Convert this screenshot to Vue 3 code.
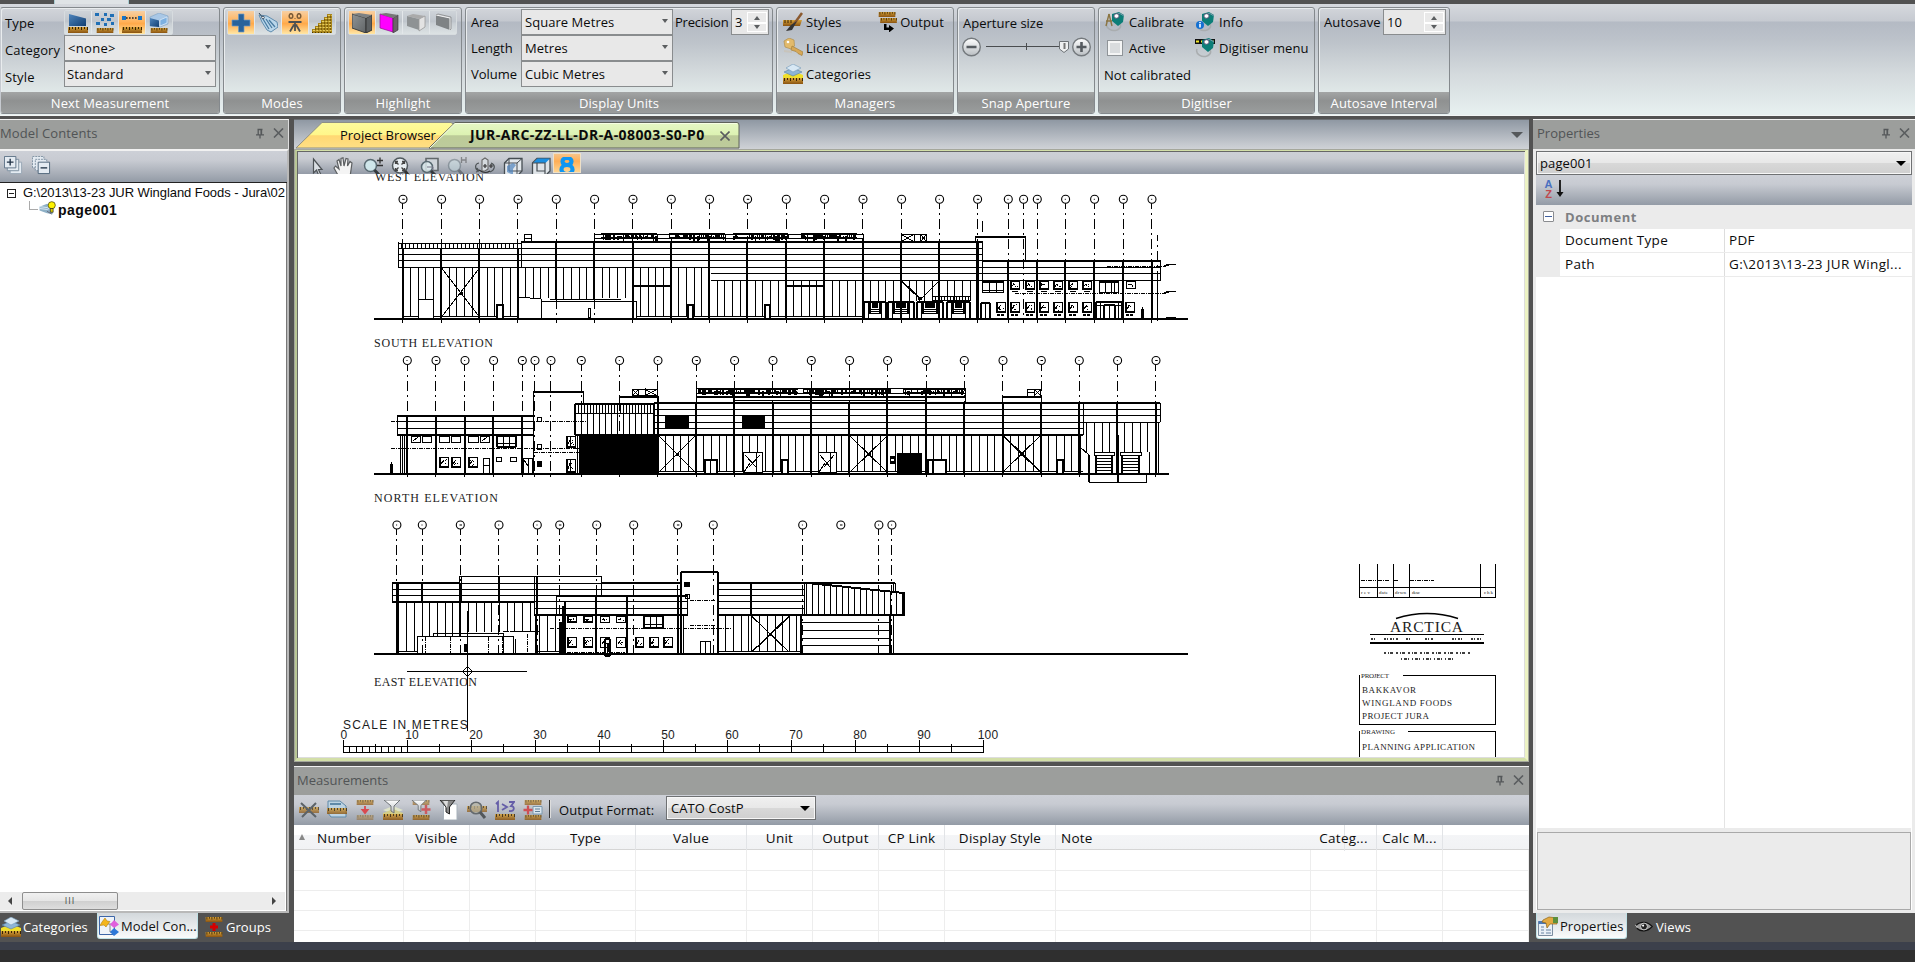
<script setup>
const columns = [
  { name: 'Number', w: 110, align: 'center', sorted: true },
  { name: 'Visible', w: 66, align: 'center' },
  { name: 'Add', w: 66, align: 'center' },
  { name: 'Type', w: 100, align: 'center' },
  { name: 'Value', w: 111, align: 'center' },
  { name: 'Unit', w: 66, align: 'center' },
  { name: 'Output', w: 66, align: 'center' },
  { name: 'CP Link', w: 66, align: 'center' },
  { name: 'Display Style', w: 111, align: 'center' },
  { name: 'Note', w: 255, align: 'left' },
  { name: 'Categ...', w: 66, align: 'center' },
  { name: 'Calc M...', w: 66, align: 'center' },
  { name: '', w: 86, align: 'left' },
]
const gridCols = columns.map(c => c.w + 'px').join(' ')
const viewTools = ['cursor', 'hand', 'zoompm', 'zoomfit', 'zoomwin', 'zoomprev', 'orbit', 'cube1', 'cube2', 'eight']
const measureTools = ['m-del', 'm-copy', 'm-down', 'm-filt', 'm-filtadd', 'm-funnel', 'm-find', 'm-123', 'm-add']

/* ---------- elevation drawing ---------- */
const ink = { base: '', detail: '' }
let layer = 'base'
let thick = ''
let solid = ''
let chain = ''
let stems = ''
let white = ''
const circles = []
let seed = 7
const rnd = () => (seed = (seed * 16807) % 2147483647) / 2147483647
const R = v => Math.round(v)
const onTop = draw => { layer = 'detail'; draw(); layer = 'base' }
const h = (x1, x2, y) => { ink[layer] += `M${x1} ${R(y - 0.5) + 0.5}H${x2}` }
const v = (x, y1, y2) => { ink[layer] += `M${R(x - 0.5) + 0.5} ${y1}V${y2}` }
const H = (x1, x2, y) => { thick += `M${x1} ${R(y)}H${x2}` }
const V = (x, y1, y2) => { thick += `M${R(x)} ${y1}V${y2}` }
const box = (x1, y1, x2, y2) => { h(x1, x2 + 1, y1); h(x1, x2 + 1, y2); v(x1, y1, y2); v(x2, y1, y2) }
const Box = (x1, y1, x2, y2) => { H(x1, x2, y1); H(x1, x2, y2); V(x1, y1, y2); V(x2, y1, y2) }
const fill = (x1, y1, x2, y2) => { solid += `M${x1} ${y1}H${x2}V${y2}H${x1}Z` }
const clear = (x1, y1, x2, y2) => { white += `M${x1} ${y1}H${x2}V${y2}H${x1}Z` }
const line = (x1, y1, x2, y2) => { ink[layer] += `M${x1} ${y1}L${x2} ${y2}` }
const cross = (x1, y1, x2, y2) => { line(x1, y1, x2, y2); line(x1, y2, x2, y1); fill(R((x1 + x2) / 2) - 1, R((y1 + y2) / 2) - 1, R((x1 + x2) / 2) + 2, R((y1 + y2) / 2) + 2) }
const panels = (x1, x2, y1, y2, step) => { for (let x = x1 + step; x < x2 - 2; x += step) v(x, y1, y2) }
const hs = (x1, x2, ys) => ys.forEach(y => h(x1, x2, y))
const grid = (xs, cy, end) => xs.forEach(x => {
  circles.push([x + 0.3, cy])
  if (end) stems += `M${R(x - 0.5) + 0.5} ${cy + 4}V${end}`
})
const noise = (x1, x2, y1, y2) => {
  fill(x1, y1, x2, y1 + 2)
  for (let x = x1; x < x2; x += 2) {
    if (rnd() > 0.15) fill(x, y1 + 1 + R(rnd() * 2), x + 1 + R(rnd()), y1 + 4 + R(rnd() * (y2 - y1 - 4)))
  }
  h(x1, x2, y1 + 4)
}
const win = (x1, y1, x2, y2, heavy) => {
  box(x1, y1, x2, y2)
  for (let i = 0; i < 4; i++) {
    const x = x1 + 2 + R(rnd() * (x2 - x1 - 4)); const y = y1 + 2 + R(rnd() * (y2 - y1 - 4))
    fill(x, y, x + 1, y + 1)
  }
  line(x1 + 2, y2 - 3, (x1 + x2) / 2, y1 + 3)
  if (heavy) { fill(x1, y2 - 1, x2 + 1, y2 + 1); v(x1 + 1, y1, y2) }
}
const door = (x1, y1, x2, y2) => onTop(() => { clear(x1, y1, x2, y2); H(x1, x2 + 1, y1 + 1); v(x1, y1, y2); v(x1 + 1, y1, y2); v(x2, y1, y2); v(x2 - 1, y1, y2) })

/* first elevation */
const g1 = [402.7, 441.3, 479.3, 517.7, 556, 594.3, 632.7, 671, 709.3, 747.3, 786, 824.3, 862.7, 901.3, 939.3, 977.3]
const g1b = [1008, 1023.3, 1037, 1065.3, 1094.3, 1123, 1151.7]
grid(g1.concat(g1b), 199.3, 323)
H(374, 1188, 319)
hs(398, 522, [243, 248, 254, 260, 267]); v(398, 242, 267); v(521, 241, 267)
for (let x = 401; x < 520; x += 4) v(x, 243, 248)
H(521, 983, 242)
hs(522, 982, [248, 254, 260, 267]); v(982, 241, 281)
hs(711, 982, [273, 280])
g1.forEach(x => V(x, x < 520 ? 248 : 241, (x > 540 && x < 600) ? 300 : 319))
for (let i = 0; i < 8; i++) {
  if (i === 4) panels(g1[i], g1[i + 1], 267, 299, 7.7)
  else if (i === 3 || i === 5) panels(g1[i], g1[i + 1], 267, 298, 7.7)
  else panels(g1[i], g1[i + 1], 267, 316, 7.7)
}
for (let i = 8; i < 12; i++) panels(g1[i], g1[i + 1], 280, 316, 7.7)
for (let i = 12; i < 15; i++) panels(g1[i], g1[i + 1], 280, 301, 7.7)
h(403, 518, 316); h(636, 863, 316)
cross(441.5, 268, 479.5, 317)
clear(419, 299, 433, 318)
onTop(() => box(418, 299, 433, 318))
H(633, 671, 286); H(786, 824, 286)
line(518, 297, 541, 299); v(541, 299, 319); h(541, 636, 301); h(550, 621, 299); v(636, 301, 319)
box(588, 308, 590, 317)
;[[496, 503], [687, 693], [764, 770]].forEach(([a, b]) => door(a, 304, b, 318))
box(524, 234, 531, 241); h(524, 531, 238)
h(594, 863, 234); v(594, 234, 241); v(863, 234, 241); v(657, 234, 241); v(725, 234, 241); h(594, 863, 238)
;[[601, 657], [669, 725], [733, 788], [801, 857]].forEach(([a, b]) => noise(a, b, 233, 241))
box(901, 234, 926, 241); line(902, 235, 913, 241); line(902, 241, 913, 235); v(914, 234, 243); v(920, 234, 243); line(921, 235, 926, 241); line(921, 241, 926, 235)
line(901, 281, 920, 299); line(902, 281, 921, 299); line(939, 281, 917, 303); fill(918, 297, 922, 300)
;[[864, 886], [888, 914], [917, 943], [947, 970]].forEach(([a, b]) => {
  Box(a, 302, b, 319); v(a + 4, 302, 319); v(b - 5, 302, 319)
  fill(a + 8, 303, b - 8, 308); h(a + 5, b - 5, 309); h(a + 5, b - 5, 313); h(a + 5, b - 5, 311); fill(a + 5, 303, a + 7, 313); fill(b - 7, 303, b - 5, 313)
})
h(932, 970, 296); h(932, 970, 300); for (let x = 932; x < 971; x += 3) v(x, 296, 300)
v(982, 221, 232)
H(975, 1026, 237); v(975, 236, 241); v(1025, 236, 260)
H(982, 1161, 261); hs(982, 1161, [267, 273, 280]); v(1160, 260, 280)
;[1008, 1037, 1065.3, 1094.3, 1123].forEach(x => V(x, 260, 319)); V(1152, 260, 319); V(978, 241, 319); v(1157, 280, 319)
stems += 'M1157.5 235V323'
box(982, 281, 1003, 292); v(989, 281, 292); v(996, 281, 292); h(983, 1003, 282); h(982, 1003, 290)
;[1015, 1030, 1044, 1058, 1073, 1087].forEach(c => { win(c - 5, 281, c + 4, 289, true); h(c - 3, c + 3, 291) })
box(1099, 281, 1118, 292); v(1105, 281, 292); v(1111, 281, 292); h(1099, 1118, 282); v(1114, 281, 292)
win(1126, 281, 1135, 288)
;[1001, 1015, 1030, 1044, 1058, 1073, 1087, 1130].forEach(c => { win(c - 5, 302, c + 4, 312, true); fill(c - 4, 314, c - 1, 316); fill(c, 314, c + 3, 316) })
Box(981, 303, 990, 319); v(985, 303, 319)
Box(1096, 302, 1122, 319); Box(1104, 305, 1115, 319); v(1109, 305, 319); v(1100, 302, 319); v(1118, 302, 319); h(1096, 1122, 305)
chain += 'M1015 293.5H1166M1107 266.5H1166'
;[264, 291, 317].forEach(y => { line(1164, y + 2, 1169, y); h(1168, 1176, y); fill(1166, y, 1169, y + 2) })
box(1141, 309, 1143, 318); v(1142, 307, 318)

/* second elevation */
const g2 = [407, 435.7, 464.7, 493.3, 522, 534.7, 550.7, 581, 619.3, 657.7, 696, 734.3, 772.7, 811, 849.3, 887.3, 926, 964, 1002.7, 1041, 1079, 1117.3, 1155.7]
grid(g2, 360.5, 478)
H(374, 1169, 474)
H(397, 534, 416); hs(397, 534, [421, 428]); H(397, 534, 435); v(397, 416, 435)
;[407, 435.7, 464.7, 493.3, 522].forEach(x => V(x, 416, 474))
v(400, 435, 474); v(402, 435, 474); v(404, 435, 474)
H(533, 584, 392); v(533, 391, 474); v(583, 391, 404)
Box(575, 404, 654, 435); h(575, 654, 413)
for (let x = 578; x < 653; x += 3) v(x, 404, 413)
panels(575, 654, 413, 435, 6)
fill(580, 434, 658, 474); v(577, 435, 474); v(579, 435, 474)
H(619, 659, 397); v(619, 396, 404); V(658, 396, 474)
box(632, 389, 657, 395); v(638, 389, 395); v(645, 388, 395); line(633, 390, 638, 395); line(633, 395, 638, 390); line(646, 390, 656, 395); line(646, 395, 656, 390)
H(654, 1160, 403); hs(654, 1083, [409, 415, 422, 428]); H(654, 1083, 435)
hs(1083, 1160, [409, 415, 422]); v(1083, 403, 435); v(1160, 403, 422)
h(696, 965, 388); H(696, 965, 397); h(734, 926, 400); v(965, 388, 402); v(696, 388, 402); h(696, 965, 393)
noise(698, 798, 388, 396); noise(803, 890, 388, 396); noise(903, 964, 388, 396)
;[734.3, 811, 887.3, 926].forEach(x => V(x, 388, 402))
H(1003, 1042, 397); v(1002, 397, 402); v(1041, 397, 402); box(1027, 389, 1040, 396); v(1034, 389, 396); h(1027, 1034, 392); line(1035, 390, 1040, 395); line(1035, 395, 1040, 390)
g2.slice(10).forEach(x => V(x, 403, 474))
for (let i = 9; i < 20; i++) panels(g2[i], g2[i + 1], 435, 472, 7.7)
panels(1079, 1117, 422, 452, 7.7); panels(1117, 1156, 422, 452, 7.7)
v(1149, 452, 474)
h(659, 1083, 471)
cross(659, 436, 695, 472); cross(850, 436, 887, 472); cross(1003, 436, 1040, 472); line(1004, 436, 1041, 472)
fill(665, 415, 689, 429); fill(742, 415, 765, 429)
door(704, 459, 717, 473)
door(781, 459, 788, 473)
door(927, 459, 946, 473); V(933, 459, 474)
door(1056, 459, 1063, 473)
onTop(() => {
  v(710, 460, 474)
  ;[[743, 762], [818, 836]].forEach(([a, b]) => { clear(a, 453, b, 472); box(a, 452, b, 472); line(a + 2, 455, b - 6, 467); line(b - 2, 455, a + 6, 467); line(a + 1, 472, a + 7, 463); v(b - 6, 452, 472) })
  ;[[1094, 1114], [1120, 1141]].forEach(([a, b]) => {
    clear(a, 453, b, 473); box(a, 452, b, 455); V(a + 2, 455, 474); V(b - 2, 455, 474)
    for (let y = 458; y < 474; y += 3) h(a + 2, b - 2, y)
  })
})
fill(897, 453, 922, 474); box(890, 456, 894, 463); fill(891, 457, 894, 459); fill(891, 461, 894, 463)
V(1118, 435, 482); V(1089, 455, 482); h(1089, 1147, 482); v(1146, 474, 482); line(1080, 447, 1089, 455); V(1080, 435, 474); v(1158, 422, 474)
;[[411, 420], [422, 431], [439, 449], [451, 460], [468, 478], [480, 489]].forEach(([a, b], i) => { box(a, 436, b, 442); if (i % 5 === 0) line(a + 2, 441, b - 2, 437) })
Box(497, 436, 516, 447); v(503, 436, 447); v(509, 436, 447); h(497, 516, 443)
;[[439, 448], [451, 460], [468, 477]].forEach(([a, b]) => win(a, 457, b, 467, true))
box(483, 458, 489, 474); box(496, 457, 501, 461); box(510, 457, 516, 461); h(483, 489, 465)
box(523, 458, 532, 474); v(528, 458, 474); line(524, 460, 528, 466)
box(537, 417, 541, 421); box(537, 444, 541, 449); fill(537, 461, 542, 467)
win(566, 436, 575, 447, true); win(566, 459, 575, 472, true); v(570, 436, 447); v(570, 459, 472)
chain += 'M391 421.5H586M391 448.5H581M534 452.5H580'
box(390, 464, 392, 473); v(391, 462, 473)

/* third elevation */
const g3 = [396.6, 422, 460, 498.7, 537, 559.4, 596.4, 633.4, 677.4, 713, 802.4]
grid(g3, 525, 655); grid([840.5], 525, 0); grid([878.6, 891.6], 525, 655)
H(374, 1188, 654)
H(392, 460, 583); hs(392, 536, [589, 595]); H(392, 534, 602); v(392, 583, 602)
h(459, 602, 576); hs(459, 602, [583, 589]); v(459, 576, 602); v(461, 576, 602); v(601, 576, 595); v(534, 576, 615)
hs(536, 602, [595])
;[396.6, 398, 460].forEach(x => V(x, 583, x > 450 ? 636 : 654))
V(422, 583, 602); V(499, 576, 602); V(537, 576, 615)
H(602, 680, 583); hs(602, 680, [589])
hs(534, 556, [601, 608]); H(534, 688, 615)
H(556, 688, 596); hs(556, 688, [601, 608]); v(556, 596, 615); v(687, 596, 615)
;[596.4, 627, 678].forEach(x => V(x, 596, 654))
V(536, 615, 654); v(539, 615, 654); V(565, 601, 654); v(681, 615, 654); v(683, 615, 654)
panels(399, 459, 602, 636, 7.7); panels(461, 534, 602, 632, 7.7); panels(539, 560, 615, 651, 8)
v(406, 602, 652); v(414, 602, 652); h(398, 417, 651); h(537, 560, 651)
box(417, 636, 513, 654); h(433, 503, 633); v(433, 633, 636); v(503, 633, 654); v(515, 639, 654); h(512, 540, 631)
chain += 'M425.5 637V654M450.5 637V654M488.5 637V654M502.5 637V654M503 631.5H528M527.5 634V654M550 628.5H731M690 600.5H716M690 625.5H716M567 652.5H625'
fill(559, 622, 564, 654); fill(562, 606, 564, 630)
fill(464, 644, 467, 652)
Box(681, 572, 718, 654); fill(684, 582, 690, 587); box(685, 594, 689, 598)
;[[567, 576], [583, 592], [600, 609], [616, 625]].forEach(([a, b], i) => { win(a, 616, b, 622, i < 2); win(a, 637, b, 647, i < 2) })
;[[635, 643], [649, 658], [663, 672]].forEach(([a, b]) => win(a, 637, b, 647, true))
Box(644, 616, 663, 628); v(650, 616, 628); v(656, 616, 628); h(644, 663, 624)
Box(605, 639, 610, 656); fill(607, 643, 609, 652)
box(700, 641, 710, 653); v(705, 641, 653)
H(718, 895, 583); hs(718, 805, [589, 595, 601, 608]); H(718, 905, 615); V(751, 583, 615); v(804, 583, 615); v(806, 583, 615)
panels(718, 752, 615, 652, 7.7); panels(752, 789, 615, 652, 7.7); cross(751.5, 616, 789, 652); line(752, 652, 790, 616); v(751, 615, 652); v(789, 615, 652); panels(789, 800, 615, 652, 7); h(718, 800, 651)
for (let x = 812; x < 904; x += 6) v(x, 583 + (x - 808) * 0.1, 615)
thick += 'M808 583L904 593V615'; v(893, 583, 591); v(895, 583, 591)
V(801, 615, 654); hs(800, 889, [622, 630, 638, 645]); V(890, 615, 654); v(893, 615, 654)

/* scale bar */
h(343, 984, 746); h(343, 984, 752)
for (let i = 0; i <= 20; i++) v(343.5 + i * 32, i % 2 ? 744 : 740, 753)
for (let i = 1; i < 10; i++) v(343.5 + i * 6.4, 746, 753)
const scaleLabels = [0, 10, 20, 30, 40, 50, 60, 70, 80, 90, 100].map((n, i) => ({ n, x: i ? 348 + i * 64 : 344 }))

/* title block */
hs(1359, 1496, [587, 597])
;[1359, 1377, 1393, 1409, 1480, 1495].forEach(x => v(x, 564, 598))
chain += 'M1361 580.5H1376M1378 580.5H1390M1394 580.5H1399M1410 580.5H1434'
h(1370, 1484, 634); H(1370, 1484, 643)
h(1403, 1496, 675); v(1359, 675, 725); v(1495, 675, 725); h(1359, 1496, 724)
h(1408, 1496, 731); v(1359, 731, 757); v(1495, 731, 757)
</script>

<template>
  <div class="app">
    <svg class="defs" width="0" height="0">
      <defs>
        <linearGradient id="gBlue" x1="0" y1="0" x2="1" y2="1"><stop offset="0" stop-color="#4f86bd" /><stop offset="1" stop-color="#123f73" /></linearGradient>
        <linearGradient id="gGold" x1="0" y1="0" x2="0" y2="1"><stop offset="0" stop-color="#d6a23a" /><stop offset="1" stop-color="#8a5310" /></linearGradient>
        <linearGradient id="gGrey" x1="0" y1="0" x2="1" y2="1"><stop offset="0" stop-color="#909496" /><stop offset="1" stop-color="#606466" /></linearGradient>
        <linearGradient id="gLt" x1="0" y1="0" x2="0" y2="1"><stop offset="0" stop-color="#fff" /><stop offset="1" stop-color="#b9bec2" /></linearGradient>
      </defs>
      <symbol id="ruler" viewBox="0 0 20 6"><rect width="20" height="6" fill="url(#gGold)" /><path d="M1.500 0v3M4.500 0v2M7.500 0v3M10.500 0v2M13.500 0v3M16.500 0v2M19.500 0v3" stroke="#3a2404" /></symbol>
      <symbol id="t-area" viewBox="0 0 20 20"><path d="M1 1 18 5.500V13H1Z" fill="url(#gBlue)" /><use href="#ruler" y="14" width="20" height="6" /></symbol>
      <symbol id="t-count" viewBox="0 0 20 20"><path d="M0 0h4v3h-4zM9 0h3v3h-3zM15 1h4v3h-4zM6 5h3v3h-3zM12 5h4v3h-4zM1 9h4v3h-4zM9 10h3v3h-3zM16 9h3v3h-3z" fill="#1f6fb5" /><use href="#ruler" y="15" width="20" height="5" /></symbol>
      <symbol id="t-line" viewBox="0 0 20 20"><path d="M4 5H16" stroke="#222" stroke-width="1.600" stroke-dasharray="1.600 1.400" /><path d="M0 3h4v4h-4zM16 3h4v4h-4z" fill="#1873c4" /><use href="#ruler" y="14" width="20" height="6" /></symbol>
      <symbol id="t-vol" viewBox="0 0 20 20"><path d="M1 4 10 0 19 3V11L11 14 1 13Z" fill="#a9c8e6" stroke="#7fa3c4" stroke-width=".6" /><path d="M1 5 10 7.500V14L1 13Z" fill="url(#gBlue)" /><path d="M11 7 18 4V10L11 13Z" fill="#7cb0e0" stroke="#fff" stroke-width=".5" /><use href="#ruler" y="15" width="20" height="5" /></symbol>
      <symbol id="plus" viewBox="0 0 20 20"><path d="M7.500 1h5.500v6h6v6h-6v6h-5.500v-6h-6.500v-6h6.500z" fill="#28629b" stroke="#6a9bc8" stroke-width=".7" /></symbol>
      <symbol id="tag" viewBox="0 0 20 20"><path d="M1 2 9 3 19 9 20 14 13 19 9 17 4 9Z" fill="#b9d6ea" stroke="#5f8cae" /><path d="M5 6 11 16M8 6 14 15M11 7 17 14" stroke="#4a7ca2" stroke-width="1.300" /><path d="M1 0 5 5" stroke="#345" /><circle cx="5" cy="4.500" r="1.300" fill="#fff" stroke="#456" /></symbol>
      <symbol id="level" viewBox="0 0 20 20"><g fill="none" stroke="#7a5b38" stroke-width="1.500"><ellipse cx="6" cy="3" rx="1.800" ry="2.300" /><ellipse cx="14" cy="3" rx="1.800" ry="2.300" /></g><path d="M9.500 5.500h1" stroke="#7a5b38" /><path d="M3.500 9H16.500M10 8V18M9 11.500 5 18.500M11 11.500 15 18.500M7.500 12.500H12.500" stroke="#4c5052" stroke-width="1.800" fill="none" /></symbol>
      <symbol id="bricks" viewBox="0 0 20 20"><path d="M0 20V16H3V13H6V10H9V7H12V4H15V1H20V20Z" fill="#a8841a" /><path d="M1 17.500H20M4 14.500H20M7 11.500H20M10 8.500H20M13 5.500H20M16 2.500H20" stroke="#e8d060" stroke-dasharray="2 1.300" /><path d="M0 19.500H20M3 16H20M6 13H20M9 10H20M12 7H20M15 4H20" stroke="#4d3900" stroke-dasharray="1 2" /></symbol>
      <symbol id="wall1" viewBox="0 0 20 20"><path d="M0 1 14 5V20L0 15Z" fill="url(#gGrey)" stroke="#3d4042" /><path d="M14 5 20 2V17L14 20Z" fill="#5c6062" stroke="#333" /><path d="M0 1 7 0 20 2 14 5Z" fill="#7d8183" /></symbol>
      <symbol id="wall2" viewBox="0 0 20 20"><path d="M1 1 14 5V19L1 15Z" fill="#f0f" stroke="#8a118a" stroke-width=".7" /><path d="M14 5 19 2V17L14 20Z" fill="#6c6468" stroke="#333" stroke-width=".6" /><path d="M1 1 7 0 19 2 14 5Z" fill="#777" /></symbol>
      <symbol id="wall3" viewBox="0 0 20 20"><path d="M1 3 13 6V17L1 13Z" fill="#8e9294" /><path d="M13 6 19 3V14L13 18Z" fill="#e3e3e3" stroke="#999" stroke-width=".8" /><path d="M1 3 7 1 19 3 13 6Z" fill="#aaa" /></symbol>
      <symbol id="wall4" viewBox="0 0 20 20"><path d="M3 2 17 5V17L3 12Z" fill="#7f8385" /><path d="M3 2 17 5V17" fill="none" stroke="#f4f4f4" /><path d="M3 2 5 1 18 4V16L17 17" fill="none" stroke="#888" stroke-width=".8" /></symbol>
      <symbol id="styles" viewBox="0 0 20 20"><path d="M0 8H19L17 14H0Z" fill="url(#gGold)" /><path d="M2 8v3M5 8v3M8 8v3" stroke="#3a2404" /><path d="M19 1 11 12" stroke="#8b5a30" stroke-width="2.500" /><path d="M14 9 9 18 3 19 8 13Z" fill="#333" /></symbol>
      <symbol id="output" viewBox="0 0 20 20"><use href="#ruler" width="20" height="5" /><use href="#ruler" x="3" y="6" width="17" height="5" /><path d="M7 12V18H12V20.500L17 16.500 12 13V15.500H9.500V12Z" fill="#000" /></symbol>
      <symbol id="key" viewBox="0 0 20 20"><path d="M1 3 6 0 11 2 11.500 8 8 11 2 9Z" fill="#e2ba6b" stroke="#b08f50" stroke-width=".7" /><circle cx="5" cy="4" r="1.300" fill="#fff" /><path d="M9 8 20 14 19 17.500 15 15.500 13 13.500 8 12Z" fill="#d8a957" stroke="#a5813c" stroke-width=".7" /><path d="M1 13 9 14" stroke="#c8c4bb" stroke-width="2" /></symbol>
      <symbol id="cats" viewBox="0 0 20 20"><path d="M0 11 10 7 20 11V14H0Z" fill="#f0df2b" /><path d="M1 8 10 4 19 8 10 12Z" fill="#8eb5d6" stroke="#5580a5" stroke-width=".6" /><path d="M3 4 10 0 18 4 10 8Z" fill="#d8e8f4" stroke="#7298b8" stroke-width=".6" /><use href="#ruler" y="14" width="20" height="6" /></symbol>
      <symbol id="dig" viewBox="0 0 20 20"><path d="M2 11C0 16 7 20 12 18S16 12 14 11" fill="none" stroke="#a9adaf" stroke-width="1.500" /><path d="M7 2 14 0 19 3 18 10 13 14 7 9Z" fill="#0c7e78" /><path d="M9 5 14 1 19 4" fill="none" stroke="#79a" /><ellipse cx="11.500" cy="4" rx="2.600" ry="2.300" fill="#fff" stroke="#557" stroke-width="1" /></symbol>
      <symbol id="calib" viewBox="0 0 20 20"><use href="#dig" x="0" y="0" width="20" height="20" /><path d="M4 2 1 14M4 2 7 14M1 9H7" stroke="#8a7442" stroke-width="1.400" fill="none" /></symbol>
      <symbol id="info" viewBox="0 0 20 20"><use href="#dig" width="20" height="20" /><circle cx="5" cy="13" r="4" fill="#1470d2" /><path d="M5 12v3.500M5 10v1.200" stroke="#fff" stroke-width="1.600" /></symbol>
      <symbol id="digmenu" viewBox="0 0 20 20"><path d="M0 1H20V6H0Z" fill="#111" /><path d="M1 2.500h3v2h-3zM6 2.500h3v2h-3zM16 2.500h3v2h-3z" fill="#f3ea2c" /><use href="#dig" width="20" height="20" /></symbol>
      <symbol id="pin" viewBox="0 0 10 10"><path d="M2.500 1H7.500M3.200 1V6M6.500 1V6M1 6.300H9M5 6V10" stroke="#55585a" stroke-width="1.300" fill="none" /><path d="M5.500 1H7V6H5.500Z" fill="#55585a" /></symbol>
      <symbol id="x" viewBox="0 0 10 10"><path d="M.5.5 9.500 9.500M9.500.5.5 9.500" stroke="#5a5d5f" stroke-width="1.600" /></symbol>
      <symbol id="expand" viewBox="0 0 20 20"><g fill="#e4ebf2"><path d="M6.500 6.500H18.500V18.500H6.500Z" stroke="#9aa8b5" /><path d="M3.500 3.500H15.500V15.500H3.500Z" stroke="#7d8fa0" /><path d="M.5.5H12.500V12.500H.5Z" stroke="#5f7488" /></g><path d="M3 6.500H10M6.500 3V10" stroke="#203246" stroke-width="1.400" /></symbol>
      <symbol id="collapse" viewBox="0 0 20 20"><g fill="#e4ebf2" stroke="#7d8fa0"><path d="M.5.5H12.500V12.500H.5Z" stroke-dasharray="2 1" /><path d="M3.500 3.500H15.500V15.500H3.500Z" stroke-dasharray="2 1" /><path d="M6.500 6.500H18.500V18.500H6.500Z" stroke="#4f657a" /></g><path d="M9 12.500H16" stroke="#203246" stroke-width="1.400" /></symbol>
      <symbol id="page" viewBox="0 0 18 16"><path d="M0 6 8 3 14 5V14L8 13 0 10Z" fill="#8eb0c6" /><path d="M0 8 8 9 14 6M0 6 8 7 14 4" stroke="#dceaf4" fill="none" /><path d="M8 11 13 14" stroke="#667" stroke-width="1" /><circle cx="13" cy="4.500" r="3.800" fill="#fff200" stroke="#4a4400" stroke-width=".8" /><path d="M11.500 8H14.500V12H11.500Z" fill="#d8cc00" stroke="#222" stroke-width=".7" /></symbol>
      <symbol id="cursor" viewBox="0 0 20 20"><path d="M6.500 2V16L9.500 13 12 19 14 18 11.500 12.500H15Z" fill="#d9dee3" stroke="#4d5256" stroke-width="1.200" /></symbol>
      <symbol id="hand" viewBox="0 0 20 20"><path d="M6 20 1 11 2.500 9 6 12 4 4 6 2.500 8 9V1.500L10 .8 11 9 13 1.500 15 2 14.500 9 17 4.500 19 6 17 20Z" fill="#f4f4f4" stroke="#5c5f61" stroke-width="1.200" /></symbol>
      <symbol id="lens" viewBox="0 0 20 20"><circle cx="7.500" cy="8.500" r="6" fill="#cfe6ea" stroke="#596a72" stroke-width="1.500" /><path d="M11.500 13 17 19" stroke="#33393d" stroke-width="3" /></symbol>
      <symbol id="zoompm" viewBox="0 0 20 20"><use href="#lens" width="20" height="20" /><path d="M14 3.500H20M17 .5V6.500M14 8.500H20" stroke="#333" stroke-width="1.300" /></symbol>
      <symbol id="zoomfit" viewBox="0 0 20 20"><circle cx="9" cy="8.500" r="7.500" fill="#e8eef1" stroke="#50585d" stroke-width="1.500" /><path d="M14 14 18 19" stroke="#333" stroke-width="3" /><path d="M4.500 7V4.500H7M11 4.500H13.500V7M13.500 11V13.500H11M7 13.500H4.500V11M5 5 7.500 7.500M13 5 10.500 7.500M13 13 10.500 10.500M5 13 7.500 10.500" stroke="#444" stroke-width="1.300" fill="none" /></symbol>
      <symbol id="zoomwin" viewBox="0 0 20 20"><path d="M7 1.500H19V13.500H7Z" fill="#cfd5da" stroke="#62686c" stroke-width="1.600" /><circle cx="8" cy="10" r="5.500" fill="#dfeef0" fill-opacity=".8" stroke="#596a72" stroke-width="1.500" /><path d="M8 10h6v4" stroke="#778" fill="none" /><path d="M12 14 17 19" stroke="#33393d" stroke-width="3" /></symbol>
      <symbol id="zoomprev" viewBox="0 0 20 20"><g opacity=".45"><use href="#lens" width="20" height="20" /><path d="M14.500 0V6M19 0V6M14.500 3H19" stroke="#333" stroke-width="1.300" /></g></symbol>
      <symbol id="orbit" viewBox="0 0 20 20"><path d="M4 6C-1 7 0 13 4 14M16 6C21 8 20 13 15 15M4 14 2 11M4 14 1 15" fill="none" stroke="#4d5356" stroke-width="1.200" /><path d="M7 3 10 1 13 3V12L10 14H7Z" fill="#d5dade" stroke="#666" stroke-width="1.100" /><path d="M8 9H12M10 7V11M14 9H18M16 7V11M4 13C8 16 12 16 15 14" stroke="#333" fill="none" stroke-width="1.200" /></symbol>
      <symbol id="cube1" viewBox="0 0 20 20"><path d="M1.500 6 6 1.500H19V14L14 19H1.500Z" fill="#e3e8ec" stroke="#464d52" stroke-width="1.300" /><path d="M1.500 6H14V19M14 6 19 1.500M6 1.500V14H19" stroke="#464d52" fill="none" /><path d="M4 9 10 6 13 8 10 12V18L4 15Z" fill="#4f83bd" opacity=".7" /></symbol>
      <symbol id="cube2" viewBox="0 0 20 20"><path d="M1.500 6 6 1.500H19V14L14 19H1.500Z" fill="#dfe4e8" stroke="#464d52" stroke-width="1.300" /><path d="M2 6 6.500 1.500H19L14.500 6Z" fill="#1a8ee0" /><path d="M1.500 6H14V19M6 6V14H14" stroke="#464d52" stroke-width="1.200" fill="none" /></symbol>
      <symbol id="eight" viewBox="0 0 20 20"><g fill="none" stroke="#0e96f2" stroke-width="4.200"><ellipse cx="10" cy="4.500" rx="4.500" ry="3.500" /><ellipse cx="10" cy="12.500" rx="5.500" ry="4.500" /></g></symbol>
      <symbol id="m-del" viewBox="0 0 20 20"><use href="#ruler" y="7" width="20" height="6" opacity=".7" /><path d="M2 3 17 17M17 3 3 17" stroke="#5c6368" stroke-width="2" /></symbol>
      <symbol id="m-copy" viewBox="0 0 20 20"><path d="M1 1H13L19 6V17H4L1 13Z" fill="#bcd3e3" stroke="#5e89a8" /><path d="M3 4H14" stroke="#5e89a8" stroke-width="2" /><use href="#ruler" y="8" width="20" height="6" opacity=".8" /></symbol>
      <symbol id="m-down" viewBox="0 0 20 20"><g opacity=".7"><use href="#ruler" width="20" height="5" /><use href="#ruler" y="15" width="20" height="5" opacity=".6" /></g><path d="M10 6V11M7.500 10 10 13 12.500 10Z" stroke="#d94a50" stroke-width="1.800" fill="#d94a50" /></symbol>
      <symbol id="funnel" viewBox="0 0 20 20"><path d="M1 0H17L11 6V13L8 11V6Z" fill="url(#gLt)" stroke="#6e7377" /></symbol>
      <symbol id="m-filt" viewBox="0 0 20 20"><path d="M0 10 10 6 20 10 10 14Z" fill="#dfe4c8" /><path d="M0 13 10 9 20 13V15H0Z" fill="#d3cd88" /><use href="#funnel" width="20" height="20" /><use href="#ruler" y="14" width="20" height="6" opacity=".85" /></symbol>
      <symbol id="m-filtadd" viewBox="0 0 20 20"><use href="#ruler" width="20" height="5" opacity=".6" /><use href="#funnel" width="18" height="18" /><use href="#ruler" y="15" width="20" height="5" opacity=".8" /><path d="M15 5V14M10.500 9.500H19.500" stroke="#cc5b60" stroke-width="2.500" /></symbol>
      <symbol id="m-funnel" viewBox="0 0 20 20"><path d="M4.500 4H18V20H4.500Z" fill="#fff" stroke="#a8b2bb" /><path d="M1 0H16L10.500 7V14L7 12V7Z" fill="#888" stroke="#222" /><path d="M4 1H9L8 8Z" fill="#ddd" /></symbol>
      <symbol id="m-find" viewBox="0 0 20 20"><use href="#ruler" y="6" width="20" height="6" opacity=".7" /><circle cx="9" cy="8" r="5.800" fill="#b4b09e" fill-opacity=".7" stroke="#646a6e" stroke-width="1.600" /><path d="M13 12 18 18" stroke="#52575b" stroke-width="3" /></symbol>
      <symbol id="m-123" viewBox="0 0 20 20"><path d="M1 4 3 2V12M7 4 12 7 7 10M14 2H19L16 6C20 6 20 12 14 11" fill="none" stroke="#655ea8" stroke-width="1.800" /><use href="#ruler" y="14" width="20" height="6" opacity=".85" /></symbol>
      <symbol id="m-add" viewBox="0 0 20 20"><use href="#ruler" width="20" height="5" opacity=".7" /><use href="#ruler" y="15" width="20" height="5" opacity=".8" /><path d="M10 6.500H19V14H10Z" fill="#dae5ee" stroke="#7b98ae" /><path d="M12 9H17M12 11.500H17" stroke="#5f7f98" /><path d="M5 5.500V14.500M.5 10H9.500" stroke="#cf5055" stroke-width="2.300" /></symbol>
      <symbol id="model" viewBox="0 0 20 20"><path d="M.5.5H15.500V18.500H.5Z" fill="#eef3f9" stroke="#3d66a8" /><path d="M6 8H15M11 8V16H16" stroke="#888" fill="none" /><path d="M6 2 8 5 11 5.500 9 8 7 11 5 9 1 9.500 3 6Z" fill="#f3b51b" stroke="#b57d0c" stroke-width=".6" /><path d="M15 4 20 8.500 15 12 11 8.500Z" fill="#e05fdc" /><path d="M15 12 20 16 15 20 11 16Z" fill="#2e78d6" /></symbol>
      <symbol id="groups" viewBox="0 0 20 20"><use href="#ruler" width="20" height="5" /><use href="#ruler" y="15" width="20" height="5" /><path d="M10 6V14M6 10H14" stroke="#d40000" stroke-width="3" /></symbol>
      <symbol id="props" viewBox="0 0 20 20"><path d="M.5 5.500H14.500V19.500H.5Z" fill="#e9f0f6" stroke="#7b8da0" /><path d="M.5 5H14.500V8H.5Z" fill="#4b78b4" /><path d="M3 11H6M3 14H6M3 17H6M8 14H13M8 17H13" stroke="#6884a4" /><path d="M5 4 11 1 19 2V8L12 8 9 12 8 7 4 6Z" fill="#e2a941" stroke="#8d6418" stroke-width=".7" /><path d="M15 1H20V7H15Z" fill="#5d8f3c" /></symbol>
      <symbol id="eye" viewBox="0 0 20 12"><path d="M1 5C5 0 14 0 19 6C14 12 6 12 2 8" fill="#999" stroke="#111" stroke-width="1.500" /><circle cx="10" cy="6" r="3.800" fill="#222" stroke="#ddd" /><circle cx="9" cy="5" r="1.200" fill="#fff" /><path d="M0 4 3 7" stroke="#ddd" /></symbol>
    </svg>

    <div class="topstrip"><div class="toptab"></div></div>

    <div class="ribbon">
      <section class="group g-next">
        <div class="body">
          <div class="lab-col tight"><span>Type</span><span>Category</span><span>Style</span></div>
          <div class="stack">
            <div class="strip">
              <span class="tb"><svg><use href="#t-area" /></svg></span>
              <span class="tb"><svg><use href="#t-count" /></svg></span>
              <span class="tb on"><svg><use href="#t-line" /></svg></span>
              <span class="tb"><svg><use href="#t-vol" /></svg></span>
            </div>
            <div class="combo none">&lt;none&gt;<i></i></div>
            <div class="combo">Standard<i></i></div>
          </div>
        </div>
        <footer>Next Measurement</footer>
      </section>
      <section class="group g-modes">
        <div class="body">
          <div class="strip">
            <span class="tb on"><svg><use href="#plus" /></svg></span>
            <span class="tb"><svg><use href="#tag" /></svg></span>
            <span class="tb on"><svg><use href="#level" /></svg></span>
            <span class="tb"><svg><use href="#bricks" /></svg></span>
          </div>
        </div>
        <footer>Modes</footer>
      </section>
      <section class="group g-high">
        <div class="body">
          <div class="strip">
            <span class="tb on"><svg><use href="#wall1" /></svg></span>
            <span class="tb"><svg><use href="#wall2" /></svg></span>
            <span class="tb"><svg><use href="#wall3" /></svg></span>
            <span class="tb"><svg><use href="#wall4" /></svg></span>
          </div>
        </div>
        <footer>Highlight</footer>
      </section>
      <section class="group g-units">
        <div class="body">
          <div class="lab-col"><span>Area</span><span>Length</span><span>Volume</span></div>
          <div class="stack">
            <div class="combo">Square Metres<i></i></div>
            <div class="combo">Metres<i></i></div>
            <div class="combo">Cubic Metres<i></i></div>
          </div>
          <span class="inline-label">Precision</span>
          <div class="spin">3<b><i class="up"></i><i></i></b></div>
        </div>
        <footer>Display Units</footer>
      </section>
      <section class="group g-man">
        <div class="body">
          <div class="cmds">
            <span class="cmd"><svg><use href="#styles" /></svg>Styles</span>
            <span class="cmd"><svg><use href="#key" /></svg>Licences</span>
            <span class="cmd"><svg><use href="#cats" /></svg>Categories</span>
          </div>
          <div class="cmds"><span class="cmd"><svg><use href="#output" /></svg>Output</span></div>
        </div>
        <footer>Managers</footer>
      </section>
      <section class="group g-snap">
        <div class="body col">
          <span class="snap-label">Aperture size</span>
          <div class="slider">
            <svg width="129" height="20" viewBox="0 0 129 20">
              <g fill="url(#gLt)" stroke="#74797d" stroke-width="1.400"><circle cx="9.500" cy="10" r="8.800" /><circle cx="119.500" cy="10" r="8.800" /></g>
              <path d="M4.500 10H14.500M114.500 10H124.500M119.500 5V15" stroke="#565b60" stroke-width="2.600" />
              <path d="M24 9.500H98M64.500 6V13" stroke="#4a4d50" />
              <path d="M97.500 4.500H106.500V12L102 15.500 97.500 12Z" fill="#eef0f1" stroke="#6d7276" /><path d="M102.500 6V12" stroke="#777" stroke-width="2" />
            </svg>
          </div>
        </div>
        <footer>Snap Aperture</footer>
      </section>
      <section class="group g-dig">
        <div class="body">
          <div class="cmds dig1">
            <span class="cmd"><svg><use href="#calib" /></svg>Calibrate</span>
            <span class="cmd"><span class="check"></span>Active</span>
            <span class="cmd nc">Not calibrated</span>
          </div>
          <div class="cmds">
            <span class="cmd"><svg><use href="#info" /></svg>Info</span>
            <span class="cmd"><svg><use href="#digmenu" /></svg>Digitiser menu</span>
          </div>
        </div>
        <footer>Digitiser</footer>
      </section>
      <section class="group g-auto">
        <div class="body">
          <span class="inline-label">Autosave</span>
          <div class="spin wide">10<b><i class="up"></i><i></i></b></div>
        </div>
        <footer>Autosave Interval</footer>
      </section>
    </div>

    <div class="main">
      <aside class="left">
        <div class="panel-head"><span>Model Contents</span><svg class="p"><use href="#pin" /></svg><svg class="c"><use href="#x" /></svg></div>
        <div class="left-frame">
          <div class="bar left-bar"><svg><use href="#expand" /></svg><svg><use href="#collapse" /></svg></div>
          <div class="tree">
            <div class="node"><span class="minus"></span><span class="path">G:\2013\13-23 JUR Wingland Foods - Jura\02</span></div>
            <div class="node child"><span class="elbow"></span><svg><use href="#page" /></svg><b>page001</b></div>
          </div>
          <div class="hscroll"><i class="la"></i><span class="thumb">III</span><i class="ra"></i></div>
        </div>
        <div class="tabs">
          <span class="tab"><svg><use href="#cats" /></svg>Categories</span>
          <span class="tab act"><svg><use href="#model" /></svg>Model Con...</span>
          <span class="tab grp"><svg><use href="#groups" /></svg>Groups</span>
        </div>
      </aside>

      <section class="center">
        <div class="doc">
          <div class="doctabs">
            <svg class="tabshape" width="450" height="30" viewBox="0 0 450 30">
              <defs>
                <linearGradient id="ty" x1="0" y1="0" x2="0" y2="1"><stop offset="0" stop-color="#fdfc9c" /><stop offset=".48" stop-color="#fff68a" /><stop offset=".52" stop-color="#ffd873" /><stop offset="1" stop-color="#ffdf85" /></linearGradient>
                <linearGradient id="tg" x1="0" y1="0" x2="0" y2="1"><stop offset="0" stop-color="#e6f8c6" /><stop offset=".48" stop-color="#dcf2b2" /><stop offset=".52" stop-color="#bccb98" /><stop offset="1" stop-color="#bdcb9c" /></linearGradient>
              </defs>
              <path d="M2 29 28 3.500H157L161 6 140 29Z" fill="url(#ty)" stroke="#8d8f86" />
              <path d="M135 29 161 3.500H443Q445 3.500 445 6V29Z" fill="url(#tg)" stroke="#5f635b" />
              <path d="M136 29 161 4.500H443" fill="none" stroke="#f6ffe4" />
            </svg>
            <span class="t1">Project Browser</span>
            <span class="t2">JUR-ARC-ZZ-LL-DR-A-08003-S0-P0</span>
            <svg class="tx"><use href="#x" /></svg>
            <i class="drop"></i>
          </div>
          <div class="docbody">
            <div class="viewbar">
              <span v-for="t in viewTools" :key="t" class="vt" :class="{ on: t === 'eight' }"><svg><use :href="'#' + t" /></svg></span>
            </div>
            <svg class="drawing" width="1226" height="583" viewBox="298 174 1226 583">
              <g shape-rendering="crispEdges" fill="none" stroke="#000">
                <path :d="stems" stroke-dasharray="10 4 2 4" stroke-dashoffset="4" />
                <path :d="ink.base" />
                <path :d="white" fill="#fff" stroke="none" />
                <path :d="ink.detail" />
                <path :d="chain" stroke-dasharray="4 1 1 1" />
                <path :d="thick" stroke-width="2" />
                <path :d="solid" fill="#000" stroke="none" />
              </g>
              <g fill="#fff" stroke="#000" stroke-width="1.100">
                <circle v-for="(c, i) in circles" :key="i" :cx="c[0]" :cy="c[1]" r="4" />
              </g>
              <g fill="#000"><rect v-for="(c, i) in circles" :key="i" :x="c[0] - 0.800" :y="c[1] - 0.500" :width="i % 3 ? 1 : 2.500" height="1" /></g>
              <g class="cad">
                <text x="375" y="181" textLength="109">WEST ELEVATION</text>
                <text x="374" y="347" textLength="119">SOUTH ELEVATION</text>
                <text x="374" y="502" textLength="124">NORTH ELEVATION</text>
                <text x="374" y="686" textLength="103">EAST ELEVATION</text>
              </g>
              <g class="cad-sans">
                <text x="343" y="728.500" textLength="125">SCALE IN METRES</text>
                <text v-for="s in scaleLabels" :key="s.n" :x="s.x" y="739" text-anchor="middle">{{ s.n }}</text>
              </g>
              <g stroke="#000" fill="none" shape-rendering="crispEdges"><path d="M467.500 611V731M407 671.500H527" /></g>
              <path d="M467.500 666.500 472.500 671.500 467.500 676.500 462.500 671.500Z" fill="none" stroke="#000" />
              <path d="M1396 618.500Q1427 608.500 1458 618.500" fill="none" stroke="#000" stroke-width="1.400" />
              <g class="cad">
                <text class="big" x="1390" y="632" textLength="73">ARCTICA</text>
                <text class="tiny" x="1361" y="594" textLength="9">rev</text>
                <text class="tiny" x="1379" y="594" textLength="9">date</text>
                <text class="tiny" x="1395" y="594" textLength="11">drwn</text>
                <text class="tiny" x="1412" y="594" textLength="8">desc</text>
                <text class="tiny" x="1484" y="594" textLength="9">chk</text>
                <text class="sm" x="1361" y="677.500" textLength="28">PROJECT</text>
                <text class="md" x="1362" y="692.500" textLength="54">BAKKAVOR</text>
                <text class="md" x="1362" y="705.500" textLength="90">WINGLAND FOODS</text>
                <text class="md" x="1362" y="718.500" textLength="67">PROJECT JURA</text>
                <text class="sm" x="1361" y="733.500" textLength="34">DRAWING</text>
                <text class="md" x="1362" y="749.500" textLength="113">PLANNING APPLICATION</text>
              </g>
              <g stroke="#000" stroke-width="1.500" fill="none">
                <path d="M1371 639H1376M1384 639H1398M1406 639H1411M1425 639H1434M1452 639H1463M1471 639H1481" stroke-dasharray="2 1 1 2" />
                <path d="M1384 653H1470" stroke-dasharray="2 2 1 1 3 3" />
                <path d="M1401 659H1454" stroke-dasharray="1 2 3 1 1 3" />
              </g>
            </svg>
          </div>
        </div>

        <div class="measure">
          <div class="panel-head"><span>Measurements</span><svg class="p"><use href="#pin" /></svg><svg class="c"><use href="#x" /></svg></div>
          <div class="bar mbar">
            <svg v-for="t in measureTools" :key="t"><use :href="'#' + t" /></svg>
            <i class="sep"></i>
            <span class="of">Output Format:</span>
            <div class="native">CATO CostP<i></i></div>
          </div>
          <div class="grid head" :style="{ gridTemplateColumns: gridCols }">
            <span v-for="(c, i) in columns" :key="i" :class="[c.align, { sorted: c.sorted }]">{{ c.name }}</span>
          </div>
          <div v-for="r in 5" :key="r" class="grid row" :class="{ last: r === 5 }" :style="{ gridTemplateColumns: gridCols }">
            <span v-for="(c, i) in columns" :key="i"></span>
          </div>
        </div>
      </section>

      <aside class="right">
        <div class="panel-head"><span>Properties</span><svg class="p"><use href="#pin" /></svg><svg class="c"><use href="#x" /></svg></div>
        <div class="right-frame">
          <div class="native wide">page001<i></i></div>
          <div class="bar rbar">
            <span class="az"><b class="a">A</b><b class="z">Z</b></span>
            <svg width="8" height="19" viewBox="0 0 8 19"><path d="M4 0V15" stroke="#111" stroke-width="1.800" /><path d="M.5 12H7.500L4 17Z" fill="#111" /></svg>
          </div>
          <div class="cat"><span class="pm"></span>Document</div>
          <div class="props">
            <div class="prow"><span>Document Type</span><span>PDF</span></div>
            <div class="prow"><span>Path</span><span>G:\2013\13-23 JUR Wingl...</span></div>
            <div class="rest"><span></span><span></span></div>
          </div>
          <div class="desc"></div>
        </div>
        <div class="tabs">
          <span class="tab act"><svg><use href="#props" /></svg>Properties</span>
          <span class="tab views"><svg class="eye"><use href="#eye" /></svg>Views</span>
        </div>
      </aside>
    </div>
    <div class="status"></div>
  </div>
</template>

<style>
body { background: #2f2f2f; }
</style>

<style scoped>
.app { width: 1915px; height: 962px; overflow: hidden; background: #525252; font: 13px/18px "Open Sans", "Noto Sans", sans-serif; color: #0b0b0b; display: flex; flex-direction: column; white-space: nowrap; }
.app * { box-sizing: border-box; }
.defs { position: absolute; }
.topstrip { height: 4px; background: #525252; padding-left: 54px; flex: none; }
.toptab { width: 75px; height: 4px; background: #dfe3e6; border: solid #a9cdd2; border-width: 0 1px; }
.ribbon { height: 112px; flex: none; display: flex; gap: 3px; padding-top: 3px; border-bottom: 1px solid #f2f5f5; background: linear-gradient(#d6d9de 0, #c6cad1 17px, #b4bac4 18px, #bcc2ca 35px, #d4dadd 70px, #e6efef 108px); }
.group { height: 107px; border: 1px solid #84898d; border-radius: 3px; box-shadow: inset 1px 1px 0 #e9ecee; display: flex; flex-direction: column; flex: none; background: linear-gradient(#d2d5da 0, #c4c8cf 13px, #b3b9c3 14px, #bdc3ca 34px, #d2d8db 62px, #e0e8e8 84px); overflow: hidden; }
.group .body { height: 84px; display: flex; padding-top: 1px; flex: none; }
.group .body.col { flex-direction: column; }
.group footer { flex: 1; background: linear-gradient(#a3a5a5, #8f9191 40%, #9b9e9e); color: #fff; text-align: center; line-height: 22px; letter-spacing: .1px; }
.g-next { width: 220px; border-left-color: #c6cad0; letter-spacing: .15px; }
.g-modes { width: 118px; }
.g-high { width: 118px; }
.g-units { width: 308px; }
.g-man { width: 178px; }
.g-snap { width: 138px; }
.g-dig { width: 217px; }
.g-auto { width: 132px; }
.lab-col { display: flex; flex-direction: column; }
.lab-col span { height: 26px; line-height: 26px; }
.lab-col.tight { width: 63px; padding: 0 0 0 4px; }
.lab-col.tight span { height: 27px; line-height: 28px; }
.g-units .lab-col { width: 55px; padding-left: 5px; }
.stack { width: 152px; display: flex; flex-direction: column; }
.strip { display: flex; width: 109px; height: 25px; margin: 1px 0 0 0; border: 1px solid #d7dcdf; border-radius: 2px; }
.g-modes .strip, .g-high .strip { margin-left: 3px; }
.tb { flex: 1; border-right: 1px solid #e3e7ea; background: linear-gradient(#cfd4d9, #bfc5cc 45%, #c9cfd4 55%, #dce2e4); display: flex; align-items: center; justify-content: center; }
.tb:last-child { border-right: 0; }
.tb.on { background: linear-gradient(#f7cfa2, #ffb35c 45%, #ffa94a 55%, #ffe7a6); }
.tb svg, .cmd svg { width: 20px; height: 20px; flex: none; }
.combo { height: 26px; border: 1px solid #898c8e; background: #e8e8e8; line-height: 24px; padding-left: 2px; position: relative; }
.combo.none { padding-left: 3px; letter-spacing: .3px; }
.combo i { position: absolute; right: 4px; top: 9px; border: solid transparent; border-width: 4px 3.5px 0; border-top-color: #5b5e60; }
.g-units .combo { letter-spacing: .05px; padding-left: 3px; }
.inline-label { line-height: 26px; margin-left: 2px; width: 56px; letter-spacing: -.2px; }
.spin { width: 38px; height: 26px; border: 1px solid #898c8e; background: #e8e8e8; line-height: 24px; padding-left: 3px; position: relative; }
.spin.wide { width: 63px; }
.spin b { position: absolute; right: 1px; top: 2px; width: 20px; height: 20px; background: linear-gradient(#e9e9e9 0 9px, #fff 9px 11px, #e9e9e9 11px); border: 1px solid #fff; display: flex; flex-direction: column; align-items: center; justify-content: space-around; }
.spin b i { border: solid transparent; border-width: 4px 3.5px 0; border-top-color: #5b5e60; }
.spin b i.up { border-width: 0 3.5px 4px; border-bottom-color: #5b5e60; }
.cmds { display: flex; flex-direction: column; width: 95px; padding-left: 6px; }
.cmd { height: 26px; display: flex; align-items: center; gap: 3px; line-height: 26px; letter-spacing: .08px; }
.g-dig .dig1 { width: 90px; }
.g-dig .cmd { gap: 4px; }
.dig1 .nc { margin-left: -1px; padding-top: 2px; }
.check { width: 16px; height: 16px; border: 1px solid #8f9498; background: #d9dcde; box-shadow: inset 0 0 0 2px #f4f5f5; margin: 0 2px 0 2px; }
.snap-label { margin-left: 5px; line-height: 26px; height: 28px; padding-top: 1px; }
.slider { margin-left: 4px; height: 20px; }
.slider svg { display: block; }
.g-auto .inline-label { margin-left: 5px; width: 59px; letter-spacing: .1px; }
.main { height: 826px; flex: none; display: flex; gap: 4px; padding-top: 3px; }
.left { width: 289px; }
.center { width: 1235px; margin-left: 1px; display: flex; flex-direction: column; }
.right { width: 382px; }
.panel-head { height: 30px; background: #9c9e9c; border: solid #f1f1f1; border-width: 1px 0 0; color: #515456; display: flex; align-items: center; line-height: 20px; padding-bottom: 3px; }
.panel-head span { flex: 1; }
.panel-head .p { width: 10px; height: 11px; margin-right: 8px; }
.panel-head .c { width: 11px; height: 10px; }
.left .panel-head { border-right: 1px solid #ddd; padding-right: 4px; }
.left .panel-head span { letter-spacing: .1px; }
.left-frame { height: 764px; border: solid #b9b9b9; border-width: 2px 2px 2px 0; border-top-color: #f1f1f1; box-shadow: inset -1px 0 0 #777; background: #fff; display: flex; flex-direction: column; }
.bar { background: linear-gradient(#cdd0d7, #c8cbd2 30%, #939ba6); flex: none; }
.left-bar { height: 32px; border-bottom: 1px solid #222; display: flex; padding: 5px 0 0 4px; gap: 9px; }
.left-bar svg { width: 19px; height: 19px; }
.tree { flex: 1; font-family: "Liberation Sans", Arial, sans-serif; margin-right: 2px; overflow: hidden; padding-top: 1px; }
.node { height: 18px; display: flex; align-items: center; font-size: 13px; line-height: 18px; }
.path { margin-left: 7px; letter-spacing: -.06px; }
.minus { flex: none; margin-left: 7px; width: 9px; height: 9px; border: 1px solid #222; background: linear-gradient(#222, #222) center / 5px 1px no-repeat; }
.child { margin-top: -1px; }
.child svg { width: 18px; height: 15px; margin: -4px 1px 0 0; }
.child b { font-size: 14px; letter-spacing: .45px; }
.elbow { width: 9px; height: 9px; margin: -10px 1px 0 29px; border: solid #aaa; border-width: 0 0 1px 1px; }
.hscroll { height: 18px; background: #ececec; display: flex; align-items: center; padding: 0 9px 0 8px; margin-right: 2px; position: relative; top: -1px; }
.hscroll .thumb { width: 96px; height: 18px; margin-left: 10px; border: 1px solid #8e8e8e; border-radius: 2px; background: linear-gradient(#f1f1f1, #e6e6e6 48%, #d0d0d0 52%, #dedede); font-size: 9px; line-height: 15px; text-align: center; color: #444; letter-spacing: 1px; }
.hscroll .la { border: solid transparent; border-width: 4px 4px 4px 0; border-right-color: #444; }
.hscroll .ra { border: solid transparent; border-width: 4px 0 4px 4px; border-left-color: #444; margin-left: auto; }
.tabs { display: flex; height: 28px; color: #fff; align-items: flex-start; }
.tab { display: flex; height: 27px; align-items: center; padding-left: 1px; gap: 2px; }
.tab svg { width: 20px; height: 20px; flex: none; }
.left .tab:first-child { width: 97px; letter-spacing: .05px; }
.tab.act { width: 101px; height: 26px; padding-top: 1px; background: linear-gradient(#d3d8dc, #e4e8ea 45%, #fafbfb); color: #111; border: 1px solid #bfe1e6; border-top: 0; border-radius: 0 0 3px 3px; letter-spacing: 0; overflow: hidden; }
.tab.grp { margin-left: 5px; letter-spacing: .05px; }
.doc { height: 643px; display: flex; flex-direction: column; }
.doctabs { height: 30px; position: relative; background: linear-gradient(#8f98a3, #c6cad0 85%, #cfd2d6); border-top: 1px solid #6a6e72; display: flex; align-items: center; flex: none; }
.tabshape { position: absolute; left: 0; top: -1px; }
.doctabs span { position: relative; line-height: 28px; padding-top: 1px; }
.t1 { margin-left: 46px; width: 130px; letter-spacing: -.02px; }
.t2 { font-weight: 700; font-size: 14px; letter-spacing: .42px; width: 250px; }
.tx { position: relative; width: 10px; height: 10px; margin-top: 2px; }
.drop { margin-left: auto; margin-right: 6px; border: solid transparent; border-width: 6px 6px 0; border-top-color: #55585b; }
.docbody { flex: 1; border: solid #d3dfa8; border-width: 2px 4px 4px 3px; border-left-color: #b9c795; border-right-color: #edf3c4; box-shadow: inset 1px 1px 0 #666, inset -1px -1px 0 #ddd; padding: 1px 1px 1px 1px; overflow: hidden; outline: 1px solid #a5a79c; outline-offset: -1px; }
.viewbar { height: 22px; overflow: hidden; display: flex; padding-left: 5px; background: linear-gradient(#cdd0d6, #c9ccd2 30%, #949ba7); }
.vt { width: 28px; height: 26px; display: flex; justify-content: center; padding-top: 5px; flex: none; }
.vt:nth-child(2) { padding-right: 4px; }
.vt svg { width: 20px; height: 20px; flex: none; }
.vt.on { background: linear-gradient(#f5c389, #ffae55 40%, #ffd591); border: 1px solid #eee0c8; height: 20px; margin: 1px 0 0 -2px; padding-top: 3px; overflow: hidden; }
.drawing { display: block; background: #fff; }
.cad { font-family: "Liberation Serif", serif; font-size: 12px; fill: #1c1c1c; }
.cad .big { font-size: 15.5px; }
.cad .md { font-size: 9px; }
.cad .sm { font-size: 7px; }
.cad .tiny { font-size: 5px; }
.cad-sans { font-family: "Liberation Sans", sans-serif; font-size: 12px; fill: #1c1c1c; letter-spacing: .2px; }
.measure { margin-top: 4px; height: 176px; overflow: hidden; background: #fff; }
.measure .panel-head { height: 29px; padding: 0 5px 2px 3px; }
.mbar { height: 30px; display: flex; padding: 5px 0 0 5px; gap: 8px; }
.mbar svg { width: 20px; height: 20px; flex: none; }
.sep { width: 2px; height: 18px; background: linear-gradient(90deg, #333 50%, #ddd 50%); margin-left: -2px; }
.of { line-height: 21px; letter-spacing: .1px; width: 99px; }
.native { margin-top: -4px; width: 150px; height: 24px; border: 1px solid #6f7173; box-shadow: inset 0 0 0 1px #f7f7f7; background: linear-gradient(#f0f0f0, #e8e8e8 48%, #d8d8d8 52%, #cfcfcf); padding-left: 4px; line-height: 22px; position: relative; letter-spacing: .1px; }
.native i { position: absolute; right: 5px; top: 9px; border: solid transparent; border-width: 5px 5px 0; border-top-color: #000; }
.grid { display: grid; }
.head { height: 25px; background: linear-gradient(#fff 40%, #f4f5f7 42%, #f1f2f4); border-bottom: 1px solid #d5d5d5; line-height: 26px; font-size: 13.5px; letter-spacing: .25px; }
.head span { border-right: 1px solid #e2e4e7; padding: 0 5px; }
.head .center { width: auto; margin: 0; display: block; text-align: center; }
.head .sorted { position: relative; padding-right: 14px; }
.head .sorted::before { content: ""; position: absolute; left: 5px; top: 9px; border: solid transparent; border-width: 0 3px 6px; border-bottom-color: #888; }
.row { height: 20px; border-bottom: 1px solid #ededed; }
.head + .row { height: 21px; }
.row span { border-right: 1px solid #ededed; }
.row.last { border-bottom: 0; }
.right .panel-head { padding: 0 5px 3px 4px; }
.right-frame { height: 764px; background: #fff; border: solid #ebebeb; border-width: 2px 3px 3px; display: flex; flex-direction: column; }
.native.wide { width: auto; margin: 0; letter-spacing: .1px; padding-left: 3px; flex: none; }
.native.wide i { right: 5px; }
.rbar { height: 30px; padding: 4px 0 0 8px; display: flex; gap: 3px; }
.rbar svg { display: block; margin-top: 1px; }
.az { display: flex; flex-direction: column; width: 9px; font-family: "Liberation Sans", sans-serif; font-size: 11px; line-height: 10px; text-align: center; }
.az .a { color: #4a70c0; height: 10px; }
.az .z { color: #c0494d; height: 10px; }
.cat { height: 24px; background: #ebebeb; color: #7d7f82; font-weight: 700; display: flex; align-items: center; flex: none; letter-spacing: .55px; padding-bottom: 1px; }
.pm { width: 11px; height: 11px; border: 1px solid #8a8c90; border-radius: 1px; margin: 0 11px 0 7px; background: linear-gradient(#4060a0, #4060a0) center / 7px 1px no-repeat, #fff; }
.props { flex: 1; display: flex; flex-direction: column; font-size: 13.5px; }
.prow { height: 24px; display: flex; line-height: 23px; border-left: 24px solid #ebebeb; border-bottom: 1px solid #ebebeb; letter-spacing: .35px; }
.prow span { padding-left: 4px; }
.prow span:first-child { width: 165px; padding-left: 5px; border-right: 1px solid #ddd; letter-spacing: .28px; }
.rest { flex: 1; display: flex; }
.rest span:first-child { width: 189px; border-right: 1px solid #e4e4e4; }
.desc { height: 78px; margin: 4px 1px 0; background: #ebebeb; border: 1px solid #a9a9a9; box-shadow: 0 -4px 0 #ebebeb; flex: none; }
.right .tab.act { width: 91px; margin-left: 3px; letter-spacing: .05px; }
.views { margin-left: 7px; gap: 3px; letter-spacing: .1px; }
.views svg.eye { width: 18px; height: 11px; }
.status { flex: 1; background: linear-gradient(#3c404b 0 8px, #2f2f2f 8px); }
</style>
